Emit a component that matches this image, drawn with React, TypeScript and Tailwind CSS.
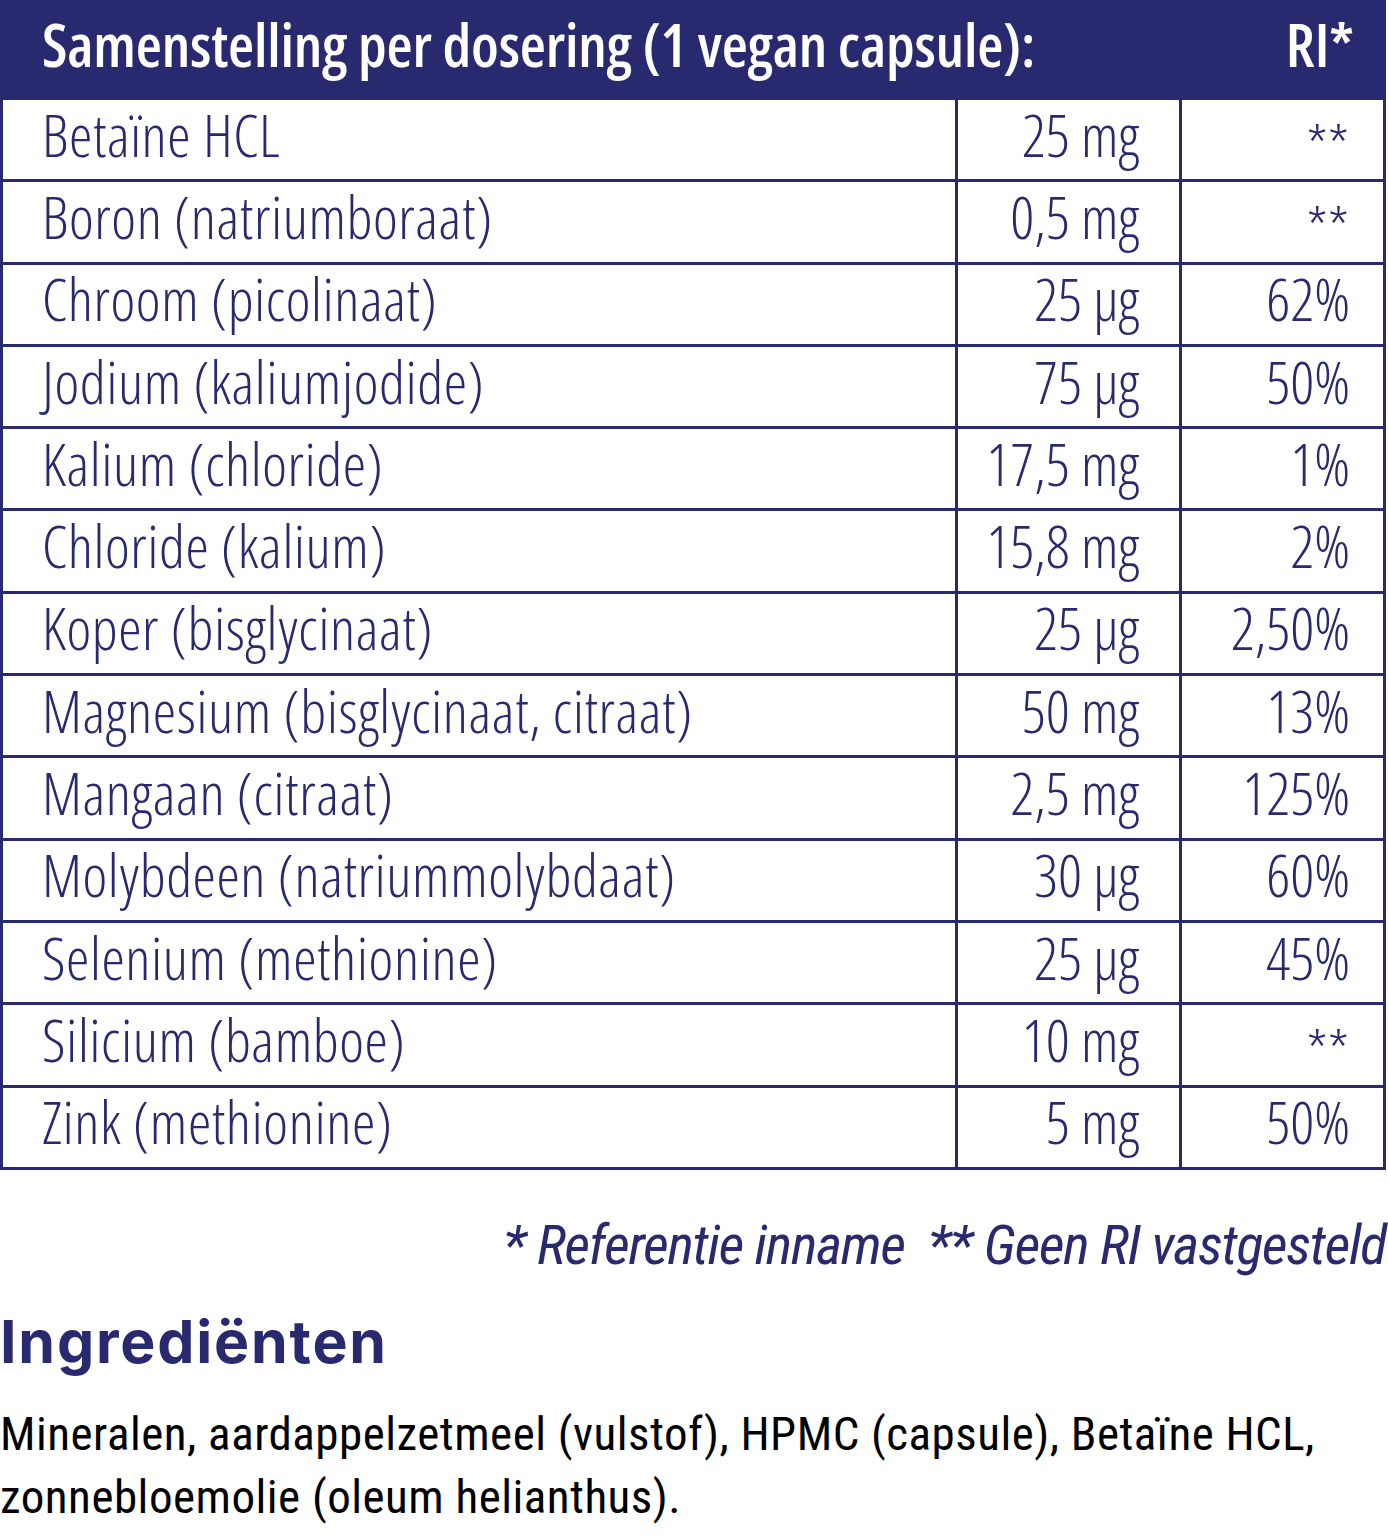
const rows = [
  { name: "Betaïne HCL", amount: "25 mg", ri: "**" },
  { name: "Boron (natriumboraat)", amount: "0,5 mg", ri: "**" },
  { name: "Chroom (picolinaat)", amount: "25 µg", ri: "62%" },
  { name: "Jodium (kaliumjodide)", amount: "75 µg", ri: "50%" },
  { name: "Kalium (chloride)", amount: "17,5 mg", ri: "1%" },
  { name: "Chloride (kalium)", amount: "15,8 mg", ri: "2%" },
  { name: "Koper (bisglycinaat)", amount: "25 µg", ri: "2,50%" },
  { name: "Magnesium (bisglycinaat, citraat)", amount: "50 mg", ri: "13%" },
  { name: "Mangaan (citraat)", amount: "2,5 mg", ri: "125%" },
  { name: "Molybdeen (natriummolybdaat)", amount: "30 µg", ri: "60%" },
  { name: "Selenium (methionine)", amount: "25 µg", ri: "45%" },
  { name: "Silicium (bamboe)", amount: "10 mg", ri: "**" },
  { name: "Zink (methionine)", amount: "5 mg", ri: "50%" },
];

export default function App() {
  return (
    <div className="w-[1388px] bg-white font-['Open_Sans',sans-serif] [font-stretch:condensed]">
      {/* TABLE */}
      <div className="w-[1386px]">
        <div className="h-[100px] bg-[#29296f] flex items-start justify-between pl-[42px] pr-[32px] pt-[14px] text-white text-[60px] leading-none font-semibold whitespace-nowrap tracking-[-0.2px]">
          <span>Samenstelling per dosering (1 vegan capsule):</span>
          <span>RI*</span>
        </div>

        <div className="border-x-[3px] border-[#29296f]">
          {rows.map((row) => (
            <div
              key={row.name}
              className="grid grid-cols-[952px_224px_1fr] h-[82.3px] border-b-[3px] border-[#29296f] text-[#29296f] text-[59px] leading-none font-light whitespace-nowrap"
            >
              <div className="flex items-center pl-[39px] pb-[11px] tracking-[0.6px]">{row.name}</div>
              <div className="flex items-center justify-end border-l-[3px] border-[#29296f] pr-[40px] pb-[11px]">
                {row.amount}
              </div>
              {row.ri === "**" ? (
                <div className="flex items-center justify-end border-l-[3px] border-[#29296f] pr-[34px] pt-[13px]">
                  **
                </div>
              ) : (
                <div className="flex items-center justify-end border-l-[3px] border-[#29296f] pr-[33px] pb-[11px]">
                  {row.ri}
                </div>
              )}
            </div>
          ))}
        </div>
      </div>

      {/* FOOTNOTE */}
      <p className="mt-[47px] w-[1386px] text-right font-['Roboto_Condensed',sans-serif] [font-stretch:normal] italic text-[56px] leading-none tracking-[-1.2px] text-[#29296f] whitespace-nowrap">
        * Referentie inname &nbsp;** Geen RI vastgesteld
      </p>

      {/* INGREDIENTS */}
      <h2 className="mt-[39px] font-['Inter',sans-serif] [font-stretch:normal] font-bold text-[59px] leading-none text-[#29296f] tracking-[1.8px]">
        Ingrediënten
      </h2>
      <p className="mt-[31px] font-['Roboto_Condensed',sans-serif] [font-stretch:normal] text-[47px] leading-[63px] tracking-[0.5px] text-black">
        Mineralen, aardappelzetmeel (vulstof), HPMC (capsule), Betaïne HCL,
        <br />
        zonnebloemolie (oleum helianthus).
      </p>
    </div>
  );
}
